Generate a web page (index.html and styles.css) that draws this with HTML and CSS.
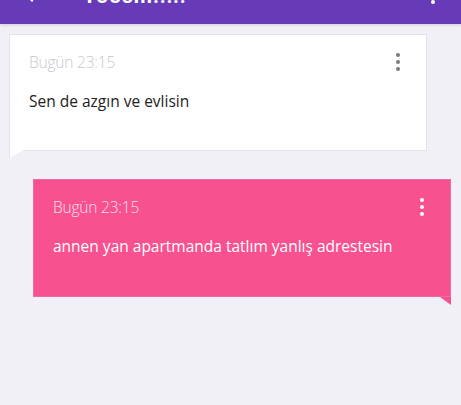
FILE: index.html
```html
<!DOCTYPE html>
<html>
<head>
<meta charset="utf-8">
<link rel="stylesheet" href="styles.css">
</head>
<body>
<header class="topbar">
  <svg class="back" viewBox="0 0 24 24" width="24" height="24"><path fill="#fff" d="M20 11H7.83l5.59-5.59L12 4l-8 8 8 8 1.41-1.41L7.83 13H20v-2z"/></svg>
  <div class="title">Yoosm!!!!!</div>
  <svg class="menu" viewBox="0 0 24 24" width="24" height="24"><circle cx="12" cy="5" r="2" fill="#fff"/><circle cx="12" cy="12" r="2" fill="#fff"/><circle cx="12" cy="19" r="2" fill="#fff"/></svg>
</header>
<main class="thread">
  <div class="msg msg-in">
    <div class="msg-head">
      <span class="time">Bugün 23:15</span>
      <span class="dots"><i></i><i></i><i></i></span>
    </div>
    <p class="text">Sen de azgın ve evlisin</p>
  </div>
  <div class="msg msg-out">
    <div class="msg-head">
      <span class="time">Bugün 23:15</span>
      <span class="dots"><i></i><i></i><i></i></span>
    </div>
    <p class="text">annen yan apartmanda tatlım yanlış adrestesin</p>
  </div>
</main>
</body>
</html>
```
FILE: styles.css
```css
html, body {
  margin: 0;
  padding: 0;
}
body {
  background: #f0f0f6;
  font-family: "Open Sans", "Noto Sans", sans-serif;
  width: 461px;
  height: 405px;
  overflow: hidden;
}
.topbar {
  height: 56px;
  margin-top: -32px;
  background: #673ab7;
  display: flex;
  align-items: center;
  padding: 0 16px 0 20px;
  box-shadow: 0 1px 3px rgba(0,0,0,0.15);
  position: relative;
}
.back {
  flex: none;
  margin-top: -4px;
}
.title {
  color: #fff;
  font-family: "Roboto", sans-serif;
  font-weight: 700;
  font-size: 21px;
  margin-left: 39px;
  letter-spacing: 1px;
}
.menu {
  flex: none;
  margin-left: auto;
  margin-top: -2px;
}
.thread {
  display: flex;
  flex-direction: column;
  padding-top: 10px;
  gap: 28px;
}
.msg {
  position: relative;
  width: 418px;
  height: 117px;
  box-sizing: border-box;
  padding: 18px 19px 0 19px;
}
.msg-in {
  margin-left: 9px;
  background: #fff;
  border: 1px solid #e2e2ea;
}
.msg-in::after {
  content: "";
  position: absolute;
  left: -1px;
  bottom: -8px;
  width: 14px;
  height: 8px;
  background: #fff;
  clip-path: polygon(0 0, 100% 0, 0 100%);
  border-left: 1px solid #e2e2ea;
}
.msg-out {
  margin-left: 33px;
  height: 118px;
  background: #f7528f;
  border: 1px solid #ec6aa0;
}
.msg-out::after {
  content: "";
  position: absolute;
  right: -1px;
  bottom: -9px;
  width: 11px;
  height: 8px;
  background: #f7528f;
  clip-path: polygon(0 0, 100% 0, 100% 100%);
}
.msg-head {
  display: flex;
  justify-content: space-between;
  align-items: flex-start;
}
.time {
  font-size: 15.5px;
  font-weight: 300;
  color: #c8c8cc;
  line-height: 18px;
  letter-spacing: -0.2px;
}
.msg-out .time {
  color: rgba(255,255,255,0.85);
}
.dots {
  display: flex;
  flex-direction: column;
  gap: 3px;
  margin-top: 0px;
  margin-right: 7px;
}
.dots i {
  display: block;
  width: 4px;
  height: 4px;
  border-radius: 50%;
  background: #7a7a7e;
}
.msg-out .dots i {
  background: #fff;
}
.text {
  margin: 20px 0 0;
  font-size: 15.5px;
  line-height: 20px;
  color: #222;
}
.msg-out .text {
  color: #fff;
}
```
